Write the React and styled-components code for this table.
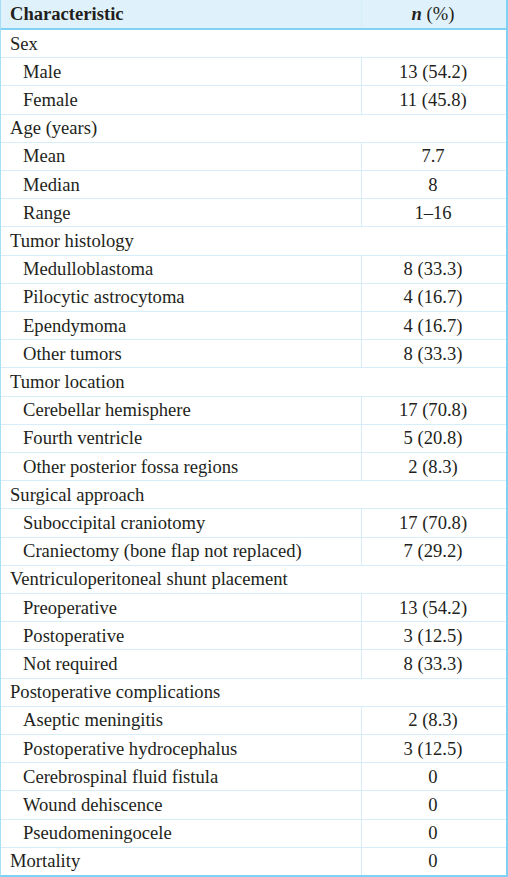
import React from 'react';
import styled, { createGlobalStyle } from 'styled-components';

const GlobalStyle = createGlobalStyle`
  html, body {
    margin: 0;
    padding: 0;
    background: #ffffff;
  }
`;

const Table = styled.div`
  width: 508px;
  height: 877px;
  box-sizing: border-box;
  display: flex;
  flex-direction: column;
  border-left: 1px solid #a6def5;
  border-right: 2px solid #7fd2f3;
  border-bottom: 2px solid #7fd2f3;
  font-family: "Liberation Serif", "Times New Roman", serif;
  font-size: 18.6px;
  color: #231f20;
`;

const HeaderRow = styled.div`
  display: grid;
  grid-template-columns: 361px 1fr;
  height: 30px;
  flex: none;
  box-sizing: border-box;
  background: #dff2fc;
  border-bottom: 2px solid #82d3f3;
`;

const Row = styled.div`
  display: grid;
  grid-template-columns: ${p => (p.$group ? '1fr' : '361px 1fr')};
  flex: 1;
  min-height: 0;
  box-sizing: border-box;
  border-top: ${p => (p.$first ? 'none' : '1px solid #d5eef9')};
`;

const Label = styled.div`
  display: flex;
  align-items: center;
  padding-left: ${p => (p.$indent ? '22px' : '9px')};
  border-right: ${p => (p.$span ? 'none' : '1px solid #d5eef9')};
  white-space: nowrap;
  font-weight: ${p => (p.$bold ? 700 : 400)};
`;

const Value = styled.div`
  display: flex;
  align-items: center;
  justify-content: center;
  padding-right: 2px;
  white-space: nowrap;
`;

const Em = styled.span`
  font-weight: 700;
  font-style: italic;
`;

const rows = [
  ['Sex'],
  ['Male', '13 (54.2)'],
  ['Female', '11 (45.8)'],
  ['Age (years)'],
  ['Mean', '7.7'],
  ['Median', '8'],
  ['Range', '1–16'],
  ['Tumor histology'],
  ['Medulloblastoma', '8 (33.3)'],
  ['Pilocytic astrocytoma', '4 (16.7)'],
  ['Ependymoma', '4 (16.7)'],
  ['Other tumors', '8 (33.3)'],
  ['Tumor location'],
  ['Cerebellar hemisphere', '17 (70.8)'],
  ['Fourth ventricle', '5 (20.8)'],
  ['Other posterior fossa regions', '2 (8.3)'],
  ['Surgical approach'],
  ['Suboccipital craniotomy', '17 (70.8)'],
  ['Craniectomy (bone flap not replaced)', '7 (29.2)'],
  ['Ventriculoperitoneal shunt placement'],
  ['Preoperative', '13 (54.2)'],
  ['Postoperative', '3 (12.5)'],
  ['Not required', '8 (33.3)'],
  ['Postoperative complications'],
  ['Aseptic meningitis', '2 (8.3)'],
  ['Postoperative hydrocephalus', '3 (12.5)'],
  ['Cerebrospinal fluid fistula', '0'],
  ['Wound dehiscence', '0'],
  ['Pseudomeningocele', '0'],
  ['Mortality', '0', true],
];

export default function App() {
  return (
    <>
      <GlobalStyle />
      <Table>
        <HeaderRow>
          <Label $bold>Characteristic</Label>
          <Value>
            <Em>n</Em>&nbsp;(%)
          </Value>
        </HeaderRow>
        {rows.map(([label, value, topLevel], i) => {
          const group = value === undefined;
          return (
            <Row key={label} $first={i === 0} $group={group}>
              <Label $indent={!group && !topLevel} $span={group}>
                {label}
              </Label>
              {!group && <Value>{value}</Value>}
            </Row>
          );
        })}
      </Table>
    </>
  );
}
